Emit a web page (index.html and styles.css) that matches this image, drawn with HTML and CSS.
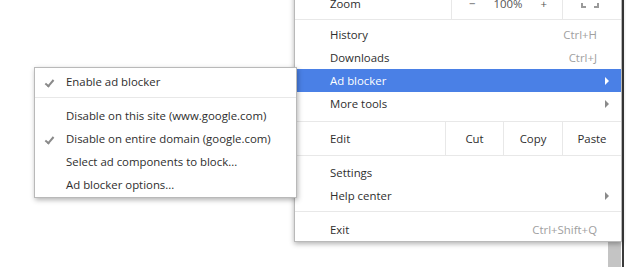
FILE: index.html
```html
<!DOCTYPE html>
<html lang="en">
<head>
    <meta charset="UTF-8">
    <title>Ad blocker menu</title>
    <link rel="stylesheet" href="styles.css">
</head>
<body>
    <div class="window-edge"></div>
    <div class="scroll-thumb"></div>

    <div class="menu">
        <div class="row-cells zoom-row">
            <div class="cell-label">Zoom</div>
            <div class="zoom-controls">
                <span>&minus;</span>
                <span>100%</span>
                <span>+</span>
            </div>
            <div class="fullscreen">
                <svg width="18" height="14" viewBox="0 0 18 14">
                    <path d="M1 4V1h4M13 1h4v3M17 9v4h-4M5 13H1V9" fill="none" stroke="#9a9a9a" stroke-width="2"/>
                </svg>
            </div>
        </div>

        <ul class="section first">
            <li><span>History</span><span class="shortcut">Ctrl+H</span></li>
            <li><span>Downloads</span><span class="shortcut">Ctrl+J</span></li>
            <li class="active"><span>Ad blocker</span><span class="arrow"></span></li>
            <li><span>More tools</span><span class="arrow"></span></li>
        </ul>

        <div class="row-cells edit-row">
            <div class="cell-label">Edit</div>
            <div class="edit-btn cut">Cut</div>
            <div class="edit-btn copy">Copy</div>
            <div class="edit-btn paste">Paste</div>
        </div>

        <ul class="section settings">
            <li><span>Settings</span></li>
            <li><span>Help center</span><span class="arrow"></span></li>
        </ul>

        <ul class="section last">
            <li><span>Exit</span><span class="shortcut">Ctrl+Shift+Q</span></li>
        </ul>
    </div>

    <div class="submenu">
        <ul class="sub-section">
            <li class="checked">Enable ad blocker</li>
        </ul>
        <ul class="sub-section">
            <li>Disable on this site (www.google.com)</li>
            <li class="checked">Disable on entire domain (google.com)</li>
            <li>Select ad components to block...</li>
            <li>Ad blocker options...</li>
        </ul>
    </div>
</body>
</html>
```
FILE: styles.css
```css
body {
    margin: 0;
    background-color: #fff;
    font-family: "Open Sans", Lato, sans-serif;
    font-size: 11.4px;
    color: #2e2e2e;
    width: 626px;
    height: 267px;
    position: relative;
    overflow: hidden;
}

ul {
    list-style: none;
    margin: 0;
    padding: 0;
}

/* things behind the menus */
.window-edge {
    position: absolute;
    left: 622px;
    top: 0;
    width: 2px;
    height: 267px;
    background-color: #3a3a3a;
}

.scroll-thumb {
    position: absolute;
    left: 608px;
    top: 242px;
    width: 13px;
    height: 25px;
    background-color: #c4c4c4;
}

/* main chrome menu */
.menu {
    position: absolute;
    left: 294px;
    top: -14px;
    width: 326px;
    background-color: #fff;
    border: 1px solid #b9b9b9;
    box-shadow: 0 2px 5px rgba(0, 0, 0, 0.3);
}

.row-cells {
    display: flex;
    align-items: stretch;
    border-bottom: 1px solid #e8e8e8;
}

.cell-label {
    flex: 1;
    display: flex;
    align-items: center;
    padding-left: 35px;
}

.zoom-row {
    height: 32px;
}

.zoom-controls {
    width: 111px;
    border-left: 1px solid #e8e8e8;
    display: flex;
    align-items: center;
    justify-content: space-between;
    padding: 0 15px 0 17px;
    box-sizing: border-box;
    color: #555;
}

.fullscreen {
    width: 54px;
    border-left: 1px solid #e8e8e8;
    display: flex;
    align-items: center;
    justify-content: center;
    padding-right: 4px;
}

.fullscreen svg {
    margin-top: -5px;
}

.section {
    border-bottom: 1px solid #e8e8e8;
}

.section.first {
    padding: 3px 0 6px;
}

.section.settings {
    padding: 5px 0 4px;
}

.section.last {
    border-bottom: none;
    padding: 6px 0 0;
}

.section li {
    height: 23px;
    display: flex;
    align-items: center;
    justify-content: space-between;
    padding: 0 24px 0 35px;
}

.section li.active {
    background-color: #4a80e6;
    color: #fff;
}

.shortcut {
    color: #a0a0a0;
}

.arrow {
    width: 0;
    height: 0;
    border-top: 4px solid transparent;
    border-bottom: 4px solid transparent;
    border-left: 4px solid #8a8a8a;
    margin-right: -12px;
}

.active .arrow {
    border-left-color: #fff;
}

.edit-row {
    height: 33px;
}

.edit-btn {
    border-left: 1px solid #e8e8e8;
    display: flex;
    align-items: center;
    justify-content: center;
}

.cut {
    width: 57px;
}

.copy {
    width: 58px;
}

.paste {
    width: 58px;
}

/* ad blocker submenu */
.submenu {
    position: absolute;
    left: 34px;
    top: 67px;
    width: 261px;
    background-color: #fff;
    border: 1px solid #b9b9b9;
    box-shadow: 1px 2px 5px rgba(0, 0, 0, 0.3);
}

.sub-section {
    padding: 2px 0 4px;
}

.sub-section + .sub-section {
    border-top: 1px solid #e8e8e8;
    padding: 6px 0 1px;
}

.sub-section li {
    height: 23px;
    line-height: 23px;
    padding-left: 31px;
    position: relative;
}

.sub-section li.checked::before {
    content: "";
    position: absolute;
    left: 12px;
    top: 8px;
    width: 3px;
    height: 7px;
    border-right: 2px solid #8a8a8a;
    border-bottom: 2px solid #8a8a8a;
    transform: rotate(40deg);
}
```
